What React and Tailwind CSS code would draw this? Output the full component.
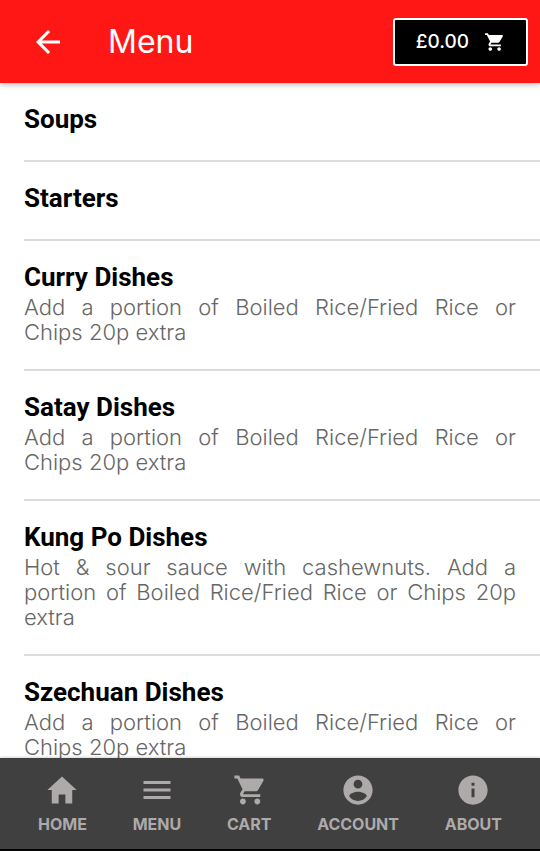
import {
  IoMdArrowBack,
  IoMdCart,
  IoMdContact,
  IoMdHome,
  IoMdInformationCircle,
  IoMdMenu
} from 'react-icons/io';

// keep the price together with the item it belongs to
const RICE_NOTE = 'Add a portion of Boiled Rice/Fried Rice or Chips\u00a020p extra';

const CATEGORIES = [
  { name: 'Soups' },
  { name: 'Starters' },
  { name: 'Curry Dishes', description: RICE_NOTE },
  { name: 'Satay Dishes', description: RICE_NOTE },
  { name: 'Kung Po Dishes', description: `Hot & sour sauce with cashewnuts. ${RICE_NOTE}` },
  { name: 'Szechuan Dishes', description: RICE_NOTE }
];

const TABS = [
  { label: 'HOME', href: '#home', Icon: IoMdHome },
  { label: 'MENU', href: '#menu', Icon: IoMdMenu },
  { label: 'CART', href: '#cart', Icon: IoMdCart },
  { label: 'ACCOUNT', href: '#account', Icon: IoMdContact },
  { label: 'ABOUT', href: '#about', Icon: IoMdInformationCircle }
];

function Header({ total }) {
  return (
    <header className="relative z-10 flex shrink-0 items-center bg-[#ff1716] pt-[18px] pr-3 pb-[17px] pl-[30px] text-white shadow-[0_1px_6px_rgba(0,0,0,0.35)]">
      <button type="button" aria-label="Back">
        <IoMdArrowBack className="size-9" />
      </button>
      <h1 className="ml-[42px] text-[32px] leading-9">Menu</h1>
      <button
        type="button"
        className="ml-auto flex h-12 items-center gap-[14px] rounded-[3px] border-2 border-white bg-black px-[21px] text-[19px] font-medium"
      >
        £{total.toFixed(2)}
        <IoMdCart className="size-[22px]" />
      </button>
    </header>
  );
}

function CategoryRow({ name, description }) {
  return (
    <li className="ml-6 border-b-2 border-[#dcdcdc]">
      <a href="#category" className="block pt-[19px] pr-6 pb-[23px]">
        <h2 className="font-[Roboto,sans-serif] text-[26px] leading-[35px] font-bold text-black">{name}</h2>
        {description && (
          <p className="pb-px text-justify text-[22px] leading-[25px] font-light text-[#666]">{description}</p>
        )}
      </a>
    </li>
  );
}

function TabBar() {
  return (
    <nav className="relative z-10 flex shrink-0 justify-between border-b-2 border-black bg-[#404040] px-[38px] pt-[14px] pb-[15px] text-[#aeaaaa] shadow-[0_0_3px_rgba(0,0,0,0.3)]">
      {TABS.map(({ label, href, Icon }) => (
        <a key={label} href={href} className="flex flex-col items-center gap-1.5">
          <Icon className="size-9" />
          <span className="text-[16px] leading-5 font-bold">{label}</span>
        </a>
      ))}
    </nav>
  );
}

export default function App() {
  return (
    <div className="flex h-screen flex-col bg-white font-[Inter,sans-serif]">
      <Header total={0} />
      <main className="min-h-0 flex-1 overflow-y-auto [scrollbar-width:none]">
        <ul>
          {CATEGORIES.map(category => (
            <CategoryRow key={category.name} {...category} />
          ))}
        </ul>
      </main>
      <TabBar />
    </div>
  );
}
